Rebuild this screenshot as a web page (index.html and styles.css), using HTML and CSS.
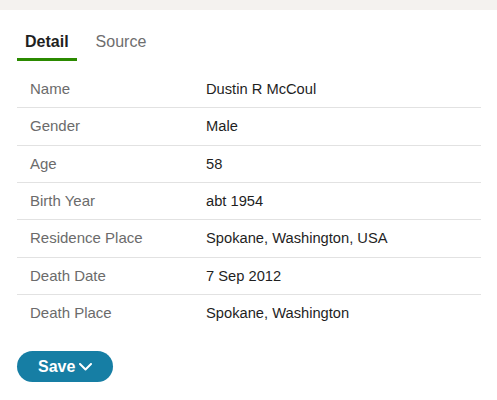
FILE: index.html
```html
<!DOCTYPE html>
<html>
<head>
<meta charset="utf-8">
<link rel="stylesheet" href="styles.css">
</head>
<body>
<div class="band"></div>
<div class="panel">
  <div class="tabs">
    <div class="tab active">Detail</div>
    <div class="tab">Source</div>
  </div>
  <div class="table">
    <div class="row"><div class="label">Name</div><div class="value">Dustin R McCoul</div></div>
    <div class="row"><div class="label">Gender</div><div class="value">Male</div></div>
    <div class="row"><div class="label">Age</div><div class="value">58</div></div>
    <div class="row"><div class="label">Birth Year</div><div class="value">abt 1954</div></div>
    <div class="row"><div class="label">Residence Place</div><div class="value">Spokane, Washington, USA</div></div>
    <div class="row"><div class="label">Death Date</div><div class="value">7 Sep 2012</div></div>
    <div class="row"><div class="label">Death Place</div><div class="value">Spokane, Washington</div></div>
  </div>
  <button class="save">Save<svg class="chev" width="13" height="8" viewBox="0 0 13 8"><path d="M1 1 L6.5 6.5 L12 1" fill="none" stroke="#fff" stroke-width="2" stroke-linecap="round" stroke-linejoin="round"/></svg></button>
</div>
</body>
</html>
```
FILE: styles.css
```css
html, body {
  margin: 0;
  padding: 0;
  background: #fff;
  font-family: "Liberation Sans", Arial, sans-serif;
}
.band {
  height: 10px;
  background: #f4f2ef;
}
.panel {
  padding: 22px 16px 0 17px;
}
.tabs {
  display: flex;
  gap: 11px;
}
.tab {
  padding: 0 8px 6px;
  line-height: 20px;
  font-size: 16px;
  color: #6e6e6e;
  border-bottom: 3px solid transparent;
}
.tab.active {
  color: #1f1f1f;
  font-weight: bold;
  border-bottom-color: #2b8a00;
}
.table {
  margin-top: 10px;
}
.row {
  display: flex;
  padding: 8px 0 7.33px;
  line-height: 21px;
  font-size: 15px;
  border-bottom: 1px solid #e2e2e2;
}
.row:last-child {
  border-bottom: none;
}
.label {
  width: 176px;
  padding-left: 13px;
  color: #6b6b6b;
  position: relative;
  top: -1px;
}
.value {
  color: #1f1f1f;
  font-size: 14.7px;
}
.save {
  margin-top: 20px;
  height: 31px;
  padding: 0 21px 0 21px;
  border: none;
  border-radius: 16px;
  background: #167ea4;
  color: #fff;
  font-family: "Liberation Sans", Arial, sans-serif;
  font-weight: bold;
  font-size: 16px;
  display: flex;
  align-items: center;
  gap: 4px;
}
.chev {
  display: block;
  margin-top: 1px;
}
```
